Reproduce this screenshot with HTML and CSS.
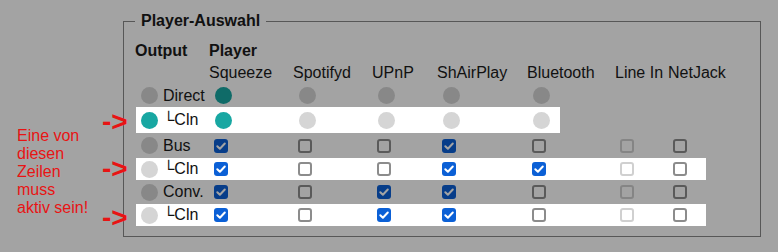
FILE: index.html
```html
<!DOCTYPE html>
<html lang="de">
<head>
<meta charset="utf-8">
<title>Player-Auswahl</title>
<link rel="stylesheet" href="styles.css">
</head>
<body>
<div class="page">
  <fieldset class="box">
    <legend class="legend">Player-Auswahl</legend>

    <div class="head">
      <div class="hc1">Output</div>
      <div class="sq">Player</div>
    </div>
    <div class="labels">
      <div class="hc1"></div>
      <div class="sq">Squeeze</div>
      <div class="sp">Spotifyd</div>
      <div class="up">UPnP</div>
      <div class="sh">ShAirPlay</div>
      <div class="bt">Bluetooth</div>
      <div class="li">Line In</div>
      <div class="nj">NetJack</div>
    </div>

    <div class="row dim r1">
      <div class="c1"><span class="dot off"></span><span class="lbl">Direct</span></div>
      <div class="sq"><span class="dot teal"></span></div>
      <div class="sp"><span class="dot off"></span></div>
      <div class="up"><span class="dot off"></span></div>
      <div class="sh"><span class="dot off"></span></div>
      <div class="bt"><span class="dot off"></span></div>
    </div>

    <div class="row hi r2">
      <div class="c1"><span class="dot teal"></span><span class="lbl">└Cln</span></div>
      <div class="sq"><span class="dot teal"></span></div>
      <div class="sp"><span class="dot off"></span></div>
      <div class="up"><span class="dot off"></span></div>
      <div class="sh"><span class="dot off"></span></div>
      <div class="end-radio"><span class="dot off"></span></div>
    </div>

    <div class="row dim r3">
      <div class="c1"><span class="dot off"></span><span class="lbl">Bus</span></div>
      <div class="sq"><span class="cb on"><svg viewBox="0 0 14 14"><path d="M3.3 7.2 5.9 9.8 10.8 4.5"/></svg></span></div>
      <div class="sp"><span class="cb"></span></div>
      <div class="up"><span class="cb"></span></div>
      <div class="sh"><span class="cb on"><svg viewBox="0 0 14 14"><path d="M3.3 7.2 5.9 9.8 10.8 4.5"/></svg></span></div>
      <div class="bt"><span class="cb"></span></div>
      <div class="li"><span class="cb dis"></span></div>
      <div class="nj"><span class="cb"></span></div>
    </div>

    <div class="row hi r4">
      <div class="c1"><span class="dot off"></span><span class="lbl">└Cln</span></div>
      <div class="sq"><span class="cb on"><svg viewBox="0 0 14 14"><path d="M3.3 7.2 5.9 9.8 10.8 4.5"/></svg></span></div>
      <div class="sp"><span class="cb"></span></div>
      <div class="up"><span class="cb"></span></div>
      <div class="sh"><span class="cb on"><svg viewBox="0 0 14 14"><path d="M3.3 7.2 5.9 9.8 10.8 4.5"/></svg></span></div>
      <div class="bt"><span class="cb on"><svg viewBox="0 0 14 14"><path d="M3.3 7.2 5.9 9.8 10.8 4.5"/></svg></span></div>
      <div class="li"><span class="cb dis"></span></div>
      <div class="nj"><span class="cb"></span></div>
    </div>

    <div class="row dim r5">
      <div class="c1"><span class="dot off"></span><span class="lbl">Conv.</span></div>
      <div class="sq"><span class="cb on"><svg viewBox="0 0 14 14"><path d="M3.3 7.2 5.9 9.8 10.8 4.5"/></svg></span></div>
      <div class="sp"><span class="cb"></span></div>
      <div class="up"><span class="cb on"><svg viewBox="0 0 14 14"><path d="M3.3 7.2 5.9 9.8 10.8 4.5"/></svg></span></div>
      <div class="sh"><span class="cb on"><svg viewBox="0 0 14 14"><path d="M3.3 7.2 5.9 9.8 10.8 4.5"/></svg></span></div>
      <div class="bt"><span class="cb"></span></div>
      <div class="li"><span class="cb dis"></span></div>
      <div class="nj"><span class="cb"></span></div>
    </div>

    <div class="row hi r6">
      <div class="c1"><span class="dot off"></span><span class="lbl">└Cln</span></div>
      <div class="sq"><span class="cb on"><svg viewBox="0 0 14 14"><path d="M3.3 7.2 5.9 9.8 10.8 4.5"/></svg></span></div>
      <div class="sp"><span class="cb"></span></div>
      <div class="up"><span class="cb on"><svg viewBox="0 0 14 14"><path d="M3.3 7.2 5.9 9.8 10.8 4.5"/></svg></span></div>
      <div class="sh"><span class="cb on"><svg viewBox="0 0 14 14"><path d="M3.3 7.2 5.9 9.8 10.8 4.5"/></svg></span></div>
      <div class="bt"><span class="cb"></span></div>
      <div class="li"><span class="cb dis"></span></div>
      <div class="nj"><span class="cb"></span></div>
    </div>
  </fieldset>

  <div class="note">Eine von<br>diesen<br>Zeilen<br>muss<br>aktiv sein!</div>
  <span class="arrow a1">-&gt;</span>
  <span class="arrow a2">-&gt;</span>
  <span class="arrow a3">-&gt;</span>
</div>
</body>
</html>
```
FILE: styles.css
```css
* { box-sizing: border-box; }
html, body { margin: 0; padding: 0; }
body {
  background: #a3a3a3;
  font-family: "Liberation Sans", Arial, sans-serif;
  font-size: 16px;
  color: #111;
  width: 778px;
  height: 252px;
  overflow: hidden;
}
.page {
  position: relative;
  padding: 12px 0 0 123px;
}
.box {
  margin: 0;
  min-width: 0;
  width: 638px;
  border: 1px solid #575757;
  padding: 10px 0 10px 11px;
}
.legend {
  font-weight: bold;
  padding: 0 6px 0 6px;
}
.head, .labels {
  display: flex;
  height: 22px;
  line-height: 22px;
  white-space: nowrap;
}
.head { font-weight: bold; }
.head > div, .labels > div, .row > div { flex: none; }
.hc1 { width: 74px; }
.sq { width: 84px; }
.sp { width: 79px; }
.up { width: 65px; }
.sh { width: 90px; }
.bt { width: 88px; }
.li { width: 53px; }
.nj { width: 38px; }

.row {
  display: flex;
  align-items: center;
  width: max-content;
  margin-left: 1px;
}
.row > div { display: flex; align-items: center; }
.row.hi { background: #fff; }
.r1 { height: 23px; }
.r2 { height: 26px; }
.r3 { height: 25px; }
.r4 { height: 22px; }
.r5 { height: 24px; }
.r6 { height: 22px; }
.c1 { width: 73px; }
.end-radio { padding-right: 10px; }

.dot {
  display: block;
  flex: none;
  width: 17px;
  height: 17px;
  border-radius: 50%;
  margin-left: 6px;
}
.c1 .dot { margin-left: 5px; margin-right: 5px; }
.dot.teal { background: #18a7a2; }
.dot.off { background: #d5d5d5; }

.cb {
  display: block;
  flex: none;
  width: 14px;
  height: 14px;
  margin-left: 5px;
  border: 2px solid #8c8c8c;
  border-radius: 3px;
  background: #fff;
}
.cb.dis { border-color: #d0d0d0; }
.cb.on { border: none; background: #0b60d6; }
.cb svg { display: block; width: 14px; height: 14px; }
.cb path { fill: none; stroke: #fff; stroke-width: 2; stroke-linecap: round; stroke-linejoin: round; }

.dim .dot, .dim .cb { filter: brightness(0.64); }

.note {
  position: absolute;
  left: 17px;
  top: 127px;
  line-height: 18px;
  color: #e81414;
}
.arrow {
  position: absolute;
  left: 102px;
  font-weight: bold;
  font-size: 28px;
  line-height: 28px;
  color: #e81414;
}
.a1 { top: 108px; }
.a2 { top: 155px; }
.a3 { top: 204px; }
```
